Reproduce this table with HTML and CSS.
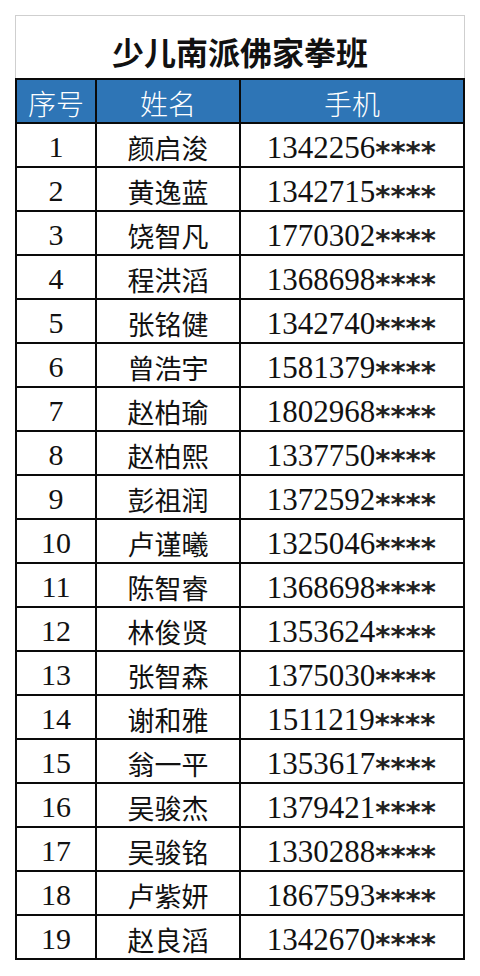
FILE: index.html
```html
<!DOCTYPE html>
<html lang="zh">
<head>
<meta charset="utf-8">
<link rel="stylesheet" href="styles.css">
</head>
<body>
<div class="sheet">
  <div class="title">少儿南派佛家拳班</div>
  <div class="grid">
    <div class="hd">序号</div><div class="hd">姓名</div><div class="hd">手机</div>
    <div class="no">1</div><div class="nm">颜启浚</div><div class="ph">1342256<span class="mask">****</span></div>
    <div class="no">2</div><div class="nm">黄逸蓝</div><div class="ph">1342715<span class="mask">****</span></div>
    <div class="no">3</div><div class="nm">饶智凡</div><div class="ph">1770302<span class="mask">****</span></div>
    <div class="no">4</div><div class="nm">程洪滔</div><div class="ph">1368698<span class="mask">****</span></div>
    <div class="no">5</div><div class="nm">张铭健</div><div class="ph">1342740<span class="mask">****</span></div>
    <div class="no">6</div><div class="nm">曾浩宇</div><div class="ph">1581379<span class="mask">****</span></div>
    <div class="no">7</div><div class="nm">赵柏瑜</div><div class="ph">1802968<span class="mask">****</span></div>
    <div class="no">8</div><div class="nm">赵柏熙</div><div class="ph">1337750<span class="mask">****</span></div>
    <div class="no">9</div><div class="nm">彭祖润</div><div class="ph">1372592<span class="mask">****</span></div>
    <div class="no">10</div><div class="nm">卢谨曦</div><div class="ph">1325046<span class="mask">****</span></div>
    <div class="no">11</div><div class="nm">陈智睿</div><div class="ph">1368698<span class="mask">****</span></div>
    <div class="no">12</div><div class="nm">林俊贤</div><div class="ph">1353624<span class="mask">****</span></div>
    <div class="no">13</div><div class="nm">张智森</div><div class="ph">1375030<span class="mask">****</span></div>
    <div class="no">14</div><div class="nm">谢和雅</div><div class="ph">1511219<span class="mask">****</span></div>
    <div class="no">15</div><div class="nm">翁一平</div><div class="ph">1353617<span class="mask">****</span></div>
    <div class="no">16</div><div class="nm">吴骏杰</div><div class="ph">1379421<span class="mask">****</span></div>
    <div class="no">17</div><div class="nm">吴骏铭</div><div class="ph">1330288<span class="mask">****</span></div>
    <div class="no">18</div><div class="nm">卢紫妍</div><div class="ph">1867593<span class="mask">****</span></div>
    <div class="no">19</div><div class="nm">赵良滔</div><div class="ph">1342670<span class="mask">****</span></div>
  </div>
</div>
</body>
</html>
```
FILE: styles.css
```css
html, body {
  margin: 0;
  padding: 0;
  background: #ffffff;
}

.sheet {
  width: 450px;
  margin: 15px 15px 0 15px;
}

.title {
  box-sizing: border-box;
  height: 63px;
  border: 1px solid #cfcfcf;
  border-bottom: none;
  display: flex;
  align-items: center;
  justify-content: center;
  padding-top: 8px;
  font-family: "Noto Sans CJK SC", sans-serif;
  font-weight: 700;
  font-size: 32px;
  line-height: 1;
  color: #111111;
}

.grid {
  display: grid;
  grid-template-columns: 78px 142px 222px;
  grid-auto-rows: 42px;
  gap: 2px;
  padding: 2px;
  background: #0a0a0a;
}

.grid > div {
  display: flex;
  align-items: center;
  justify-content: center;
  background: #ffffff;
  color: #111111;
  line-height: 1;
  padding-top: 4px;
  box-sizing: border-box;
}

.grid > .hd {
  background: #2e75b6;
  color: #ffffff;
  font-family: "Noto Sans CJK SC", sans-serif;
  font-weight: 300;
  font-size: 28px;
}

.no {
  font-family: "Liberation Serif", "Times New Roman", serif;
  font-size: 30px;
}

.ph {
  font-family: "Liberation Serif", "Times New Roman", serif;
  font-size: 31px;
}

.nm {
  font-family: "Noto Sans CJK SC", sans-serif;
  font-size: 27px;
}

.mask {
  font-family: "DejaVu Sans", sans-serif;
  font-weight: 700;
  font-size: 29px;
  color: #222222;
  width: 62px;
  transform: translateY(5px);
}
```
